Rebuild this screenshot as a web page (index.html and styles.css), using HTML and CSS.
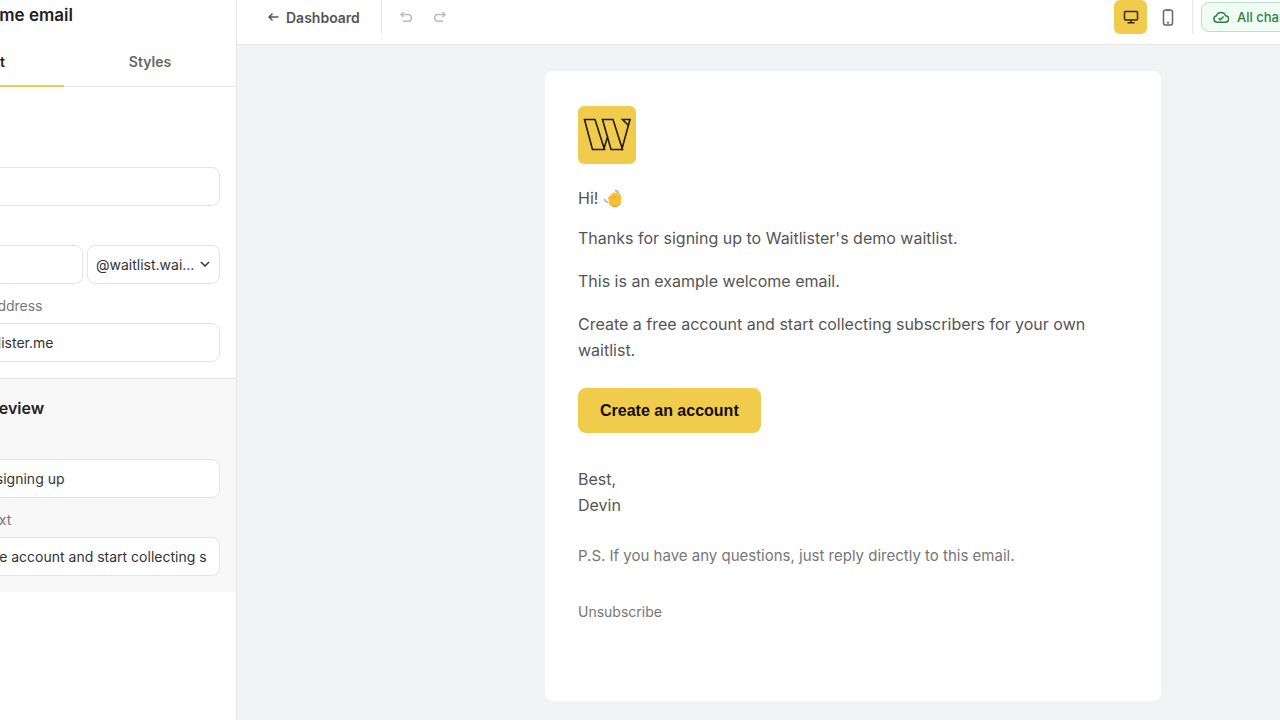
FILE: index.html
```
<!DOCTYPE html>
<html lang="en">
<head>
<meta charset="UTF-8">
<meta name="viewport" content="width=device-width, initial-scale=1.0">
<title>Welcome email</title>
<link rel="stylesheet" href="styles.css">
</head>
<body>
<div class="app">
    <aside class="sidebar">
        <div class="panel">
            <h1 class="panel-title">Welcome email</h1>
            <div class="tabs">
                <button class="tab active" type="button">Content</button>
                <button class="tab" type="button">Styles</button>
            </div>
            <section class="section">
                <h2>Sender</h2>
                <label for="senderName">Name</label>
                <input type="text" id="senderName">
                <label for="senderUser">Email</label>
                <div class="field-row">
                    <input type="text" id="senderUser">
                    <div class="select-wrap">
                        <select aria-label="Domain">
                            <option>@waitlist.wai...</option>
                        </select>
                        <svg width="10" height="6" viewBox="0 0 10 6"><path d="M1 1l4 4 4-4"/></svg>
                    </div>
                </div>
                <label for="replyTo">Reply-to address</label>
                <input type="text" id="replyTo" value="devin@waitlister.me">
            </section>
            <section class="section preview">
                <h2>Inbox preview</h2>
                <label for="subject">Subject</label>
                <input type="text" id="subject" value="Thanks for signing up">
                <label for="previewText">Preview text</label>
                <input type="text" id="previewText" value="Create a free account and start collecting subscribers">
            </section>
        </div>
    </aside>

    <div class="workspace">
        <header class="topbar">
            <a class="back" href="#">
                <svg width="11" height="10" viewBox="0 0 11 10"><path d="M10.500 5H1M4.500 1.500L1 5l3.500 3.500"/></svg>
                Dashboard
            </a>
            <span class="divider"></span>
            <button class="history" type="button" aria-label="Undo">
                <svg width="12" height="12" viewBox="0 0 12 12"><path d="M3.500 1L1 3.500L3.500 6M1 3.500h7a3.200 3.200 0 0 1 0 6.700H3"/></svg>
            </button>
            <button class="history" type="button" aria-label="Redo">
                <svg width="12" height="12" viewBox="0 0 12 12"><path d="M8.500 1L11 3.500L8.500 6M11 3.500H4a3.200 3.200 0 0 0 0 6.700h5"/></svg>
            </button>
            <div class="devices">
                <button class="device active" type="button" aria-label="Desktop">
                    <svg width="16" height="14" viewBox="0 0 16 14"><rect x="1.500" y="1.500" width="13" height="8.500" rx="1"/><path d="M8 10v2.500M4.500 12.800h7"/></svg>
                </button>
                <button class="device" type="button" aria-label="Mobile">
                    <svg width="12" height="17" viewBox="0 0 12 17"><rect x="1.500" y="1" width="9" height="15" rx="2"/><path d="M4.500 1.500h3M5 13.800h2"/></svg>
                </button>
            </div>
            <span class="divider"></span>
            <div class="status-slot">
                <div class="status">
                    <svg width="16" height="14" viewBox="0 0 16 14"><path d="M4.200 12.300a3.300 3.300 0 0 1-.7-6.500A4.700 4.700 0 0 1 12.500 5.700a3.300 3.300 0 0 1-.2 6.600zM5.700 8.100l1.800 1.700 3-3.300"/></svg>
                    All changes saved
                </div>
            </div>
        </header>

        <main class="canvas">
            <article class="email">
                <svg class="logo" width="58" height="58" viewBox="0 0 58 58">
                    <rect width="58" height="58" rx="6"/>
                    <path d="M6.500 13.500H17L26.500 43.500H14.500zM24.500 13.500H35L44.500 43.500H33zM25.500 44L29.800 30M43.500 44.500L52 13.500H44.500L50 19"/>
                </svg>
                <p class="greeting">Hi!
                    <svg class="wave" width="19" height="19" viewBox="0 0 19 19">
                        <path d="M5.500 9l5.500-5 1 1 2-1 .8 2 1.700-1 1 4-.5 5-3 3-4 0-3-2-1-2 1-1z" fill="#fbc02f" stroke="#fbc02f" stroke-width="1.500" stroke-linejoin="round"/>
                        <path d="M8 8l3 2M10 6l3 3" fill="none" stroke="#ef9645" stroke-width="1"/>
                        <path d="M7 15l3 2.500 4 0 3-2.500" fill="none" stroke="#ef9645" stroke-width="1"/>
                        <path d="M12 1.500c2 0 3 1 3.200 2.500M1 10c1 2 2 3 4 3.500" fill="none" stroke="#8db8dc" stroke-width="1.600"/>
                    </svg>
                </p>
                <p>Thanks for signing up to Waitlister's demo waitlist.</p>
                <p>This is an example welcome email.</p>
                <p>Create a free account and start collecting subscribers for your own waitlist.</p>
                <button class="cta" type="button">Create an account</button>
                <p>Best,<br>Devin</p>
                <p class="ps">P.S. If you have any questions, just reply directly to this email.</p>
                <a class="unsubscribe" href="#">Unsubscribe</a>
            </article>
        </main>
    </div>
</div>
</body>
</html>
```
FILE: styles.css
```
* {
    box-sizing: border-box;
}
body {
    margin: 0;
    font-family: Inter, sans-serif;
    color: #333;
    background-color: #f1f3f5;
    overflow: hidden;
}
button, input, select {
    font-family: inherit;
}
svg {
    flex: none;
    fill: none;
    stroke: currentColor;
    stroke-width: 1.5;
}
.app {
    display: flex;
    min-height: 100vh;
}

/* Sidebar */
.sidebar {
    flex: none;
    width: 237px;
    display: flex;
    justify-content: flex-end;
    overflow: hidden;
    background-color: #fff;
    border-right: 1px solid #e4e6e8;
}
.panel {
    flex: none;
    width: 344px;
}
.panel-title {
    margin: 0;
    padding: 3px 16px 0 56px;
    font-size: 17px;
    line-height: 24px;
    font-weight: 600;
    color: #222;
}
.tabs {
    display: flex;
    margin-top: 10px;
    border-bottom: 1px solid #e8e8ea;
}
.tab {
    flex: 1;
    height: 49px;
    padding: 0;
    border: 0;
    background: none;
    font-size: 14px;
    font-weight: 600;
    color: #666;
}
.tab.active {
    color: #222;
    box-shadow: 0 1px #efcb50, inset 0 -1px #efcb50;
}
.section {
    padding: 17px 16px 16px;
}
.section h2 {
    margin: 0 0 12px;
    padding-left: 28px;
    font-size: 16px;
    line-height: 24px;
    font-weight: 600;
    color: #222;
}
.section label {
    display: block;
    margin: 12px 0 7px;
    padding-left: 22px;
    font-size: 14px;
    line-height: 20px;
    color: #777;
}
.section input, .section select {
    display: block;
    width: 100%;
    height: 39px;
    padding: 0 12px;
    border: 1px solid #e4e4e7;
    border-radius: 8px;
    background-color: #fff;
    font-size: 14px;
    color: #333;
}
.field-row {
    display: flex;
    gap: 4px;
}
.select-wrap {
    position: relative;
    flex: none;
    width: 133px;
}
.section select {
    padding: 0 8px;
    appearance: none;
}
.select-wrap svg {
    position: absolute;
    right: 10px;
    top: 16px;
    pointer-events: none;
}
.preview {
    border-top: 1px solid #e4e4e7;
    background-color: #f8f8f9;
}

/* Top bar */
.workspace {
    flex: 1;
    min-width: 0;
    display: flex;
    flex-direction: column;
}
.topbar {
    display: flex;
    align-items: center;
    padding: 0 0 10px 31px;
    background-color: #fff;
    border-bottom: 1px solid #e4e6e8;
}
.back {
    display: flex;
    align-items: center;
    gap: 7px;
    margin-right: 21px;
    font-size: 14px;
    font-weight: 600;
    color: #555;
    text-decoration: none;
}
.divider {
    width: 1px;
    height: 34px;
    background-color: #e4e6e8;
}
.history {
    display: flex;
    align-items: center;
    justify-content: center;
    width: 34px;
    height: 34px;
    padding: 0;
    border: 0;
    background: none;
    color: #bbb;
}
.divider + .history {
    margin-left: 7px;
}
.devices {
    display: flex;
    gap: 4px;
    margin: 0 8px 0 auto;
}
.device {
    display: flex;
    align-items: center;
    justify-content: center;
    width: 33px;
    height: 34px;
    padding: 0;
    border: 0;
    border-radius: 6px;
    background: none;
    color: #666;
}
.device.active {
    background-color: #f1cb4c;
    color: #332a10;
}
.status-slot {
    width: 79px;
    margin-left: 8px;
    overflow: hidden;
}
.status {
    display: flex;
    align-items: center;
    gap: 8px;
    width: max-content;
    height: 30px;
    padding: 0 11px;
    border: 1px solid #b9dfc6;
    border-radius: 8px;
    background-color: #f0fdf4;
    font-size: 13px;
    font-weight: 500;
    color: #2f7d46;
}

/* Email */
.canvas {
    flex: 1;
    padding: 26px 119px 19px 308px;
}
.email {
    padding: 35px 33px 76px;
    border-radius: 8px;
    background-color: #fff;
    font-size: 16px;
    line-height: 26px;
    color: #555;
}
.logo {
    display: block;
    stroke: #221a08;
    stroke-width: 1.6;
}
.logo rect {
    fill: #f1cb4c;
    stroke: none;
}
.email p {
    margin: 0 0 17px;
}
.email .greeting {
    display: flex;
    align-items: center;
    gap: 5px;
    margin: 21px 0 14px;
}
.wave {
    stroke: none;
}
.cta {
    display: block;
    height: 45px;
    margin: 25px 0 33px;
    padding: 0 22px;
    border: 0;
    border-radius: 8px;
    background-color: #f1cb4c;
    font-family: "Liberation Sans", Arial, sans-serif;
    font-size: 16px;
    font-weight: bold;
    color: #110d04;
}
.email .ps {
    margin: 25px 0 29px;
    font-size: 15px;
    color: #777;
}
.unsubscribe {
    font-size: 14px;
    color: #777;
    text-decoration: none;
}
```
